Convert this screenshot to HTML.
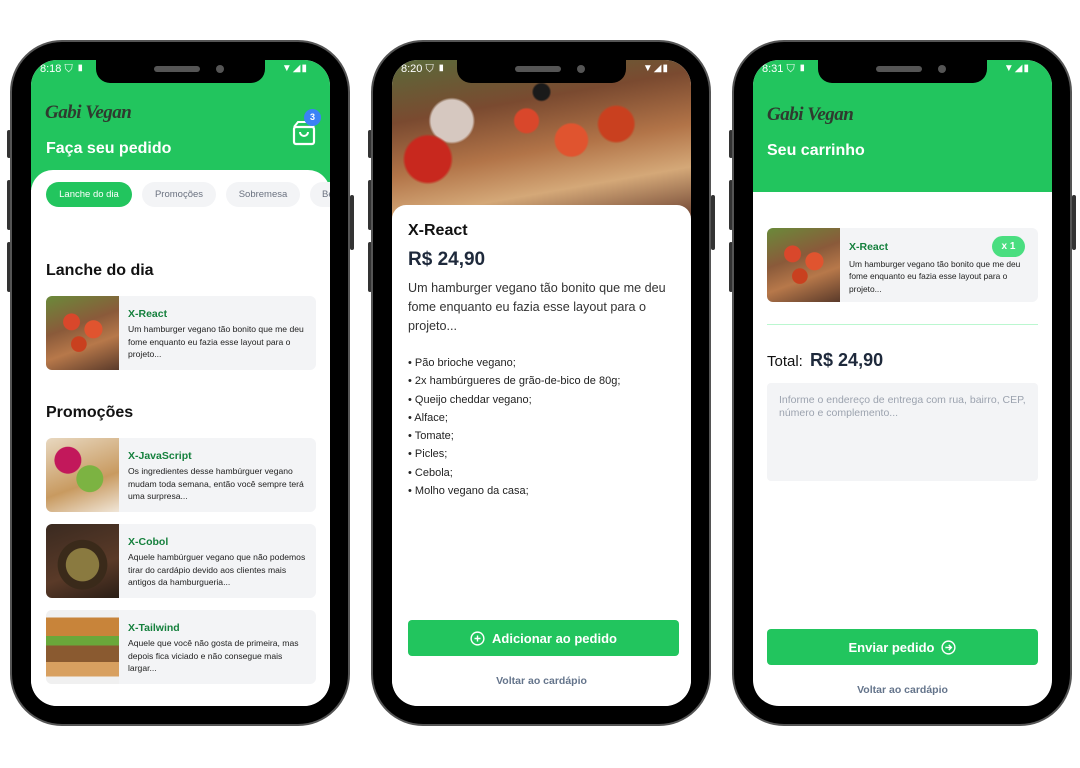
<!DOCTYPE html>
<html><head><meta charset="utf-8"><style>
*{margin:0;padding:0;box-sizing:border-box}
body{width:1080px;height:768px;background:#fff;position:relative;overflow:hidden;font-family:"Liberation Sans",sans-serif}
.ph{position:absolute;top:40px;width:340px;height:686px;border-radius:52px;background:#000;border:2px solid #555}
.btn-side{position:absolute;background:#333;width:4px;border-radius:2px}
.scr{position:absolute;left:19px;top:18px;width:299px;height:646px;border-radius:26px;background:#fff;overflow:hidden}
.notch{position:absolute;left:65px;top:0;width:169px;height:23px;background:#000;border-radius:0 0 14px 14px;z-index:5}
.notch .spk{position:absolute;left:58px;top:6px;width:46px;height:6px;background:#555;border-radius:3px}
.notch .cam{position:absolute;left:120px;top:5px;width:8px;height:8px;background:#555;border-radius:50%}
.a{position:absolute}
.st{position:absolute;top:3px;color:#fff;font-size:11px;z-index:6}
.sti{position:absolute;top:3px;right:22px;color:#fff;font-size:10px;z-index:6;letter-spacing:1px}
.g{background:#22c55e}
.logo{font-family:"Liberation Serif",serif;font-style:italic;font-size:19px;color:#2f3a2f;font-weight:bold;letter-spacing:-0.5px}
.h1{color:#fff;font-weight:bold;font-size:16px}
.h2{color:#111;font-weight:bold;font-size:16px}
.chip{position:absolute;top:122px;height:25px;border-radius:13px;background:#f3f4f6;color:#6b7280;font-size:9.5px;line-height:25px;text-align:center}
.card{position:absolute;left:15px;width:270px;height:74px;background:#f3f4f6;border-radius:6px;overflow:hidden}
.card .img{position:absolute;left:0;top:0;width:73px;height:74px}
.card .t{position:absolute;left:82px;top:12px;color:#15803d;font-weight:bold;font-size:10.5px}
.card .d{position:absolute;left:82px;top:27px;width:180px;color:#222;font-size:8.6px;line-height:12.5px}
.bru{background:radial-gradient(circle at 35% 35%,#d9472b 0 12%,transparent 13%),radial-gradient(circle at 65% 45%,#e0542f 0 14%,transparent 15%),radial-gradient(circle at 45% 65%,#c9401f 0 12%,transparent 13%),linear-gradient(160deg,#6a8a3a 0,#8a5a3a 40%,#b7784a 65%,#5a3a2a 100%)}
.gbtn{position:absolute;height:36px;border-radius:4px;background:#22c55e;color:#fff;font-weight:bold;font-size:13px;display:flex;align-items:center;justify-content:center;gap:7px}
.volt{position:absolute;left:0;width:299px;text-align:center;color:#64748b;font-size:10.5px;font-weight:bold}
</style></head><body>

<!-- Phone 1 -->
<div class="btn-side" style="left:7px;top:130px;height:28px"></div>
<div class="btn-side" style="left:7px;top:180px;height:50px"></div>
<div class="btn-side" style="left:7px;top:242px;height:50px"></div>
<div class="btn-side" style="left:350px;top:195px;height:55px"></div>
<div class="ph" style="left:10px">
 <div class="scr">
  <div class="notch"><div class="spk"></div><div class="cam"></div></div>
  <div class="st" style="left:9px">8:18 ⛉ ▮</div><div class="sti">▼◢▮</div>
  <div class="a g" style="left:0;top:0;width:299px;height:130px"></div>
  <div class="a logo" style="left:14px;top:42px">Gabi Vegan</div>
  <div class="a h1" style="left:15px;top:80px">Faça seu pedido</div>
  <svg class="a" style="left:261px;top:60px" width="24" height="26" viewBox="0 0 24 26"><rect x="2" y="7" width="20" height="17" rx="2" fill="none" stroke="#fff" stroke-width="2.2"/><path d="M2 7 L6 2 H18 L22 7" fill="none" stroke="#fff" stroke-width="2"/><path d="M8 12 a4 4 0 0 0 8 0" fill="none" stroke="#fff" stroke-width="2"/></svg>
  <div class="a" style="left:273px;top:49px;width:17px;height:17px;border-radius:50%;background:#3b82f6;color:#fff;font-size:9px;text-align:center;line-height:17px;font-weight:bold">3</div>
  <div class="a" style="left:0;top:110px;width:299px;height:540px;background:#fff;border-radius:22px 22px 0 0"></div>
  <div class="chip" style="left:15px;width:86px;background:#22c55e;color:#fff">Lanche do dia</div>
  <div class="chip" style="left:111px;width:74px">Promoções</div>
  <div class="chip" style="left:195px;width:74px">Sobremesa</div>
  <div class="chip" style="left:279px;width:40px;text-align:left;padding-left:12px">Bebidas</div>
  <div class="a h2" style="left:15px;top:202px">Lanche do dia</div>
  <div class="card" style="top:236px"><div class="img bru"></div><div class="t">X-React</div><div class="d">Um hamburger vegano tão bonito que me deu fome enquanto eu fazia esse layout para o projeto...</div></div>
  <div class="a h2" style="left:15px;top:344px">Promoções</div>
  <div class="card" style="top:378px"><div class="img" style="background:radial-gradient(circle at 30% 30%,#c2185b 0 18%,transparent 19%),radial-gradient(circle at 60% 55%,#7cb342 0 22%,transparent 23%),linear-gradient(160deg,#e8d8c0,#c89a60 60%,#f0e6d8)"></div><div class="t">X-JavaScript</div><div class="d">Os ingredientes desse hambúrguer vegano mudam toda semana, então você sempre terá uma surpresa...</div></div>
  <div class="card" style="top:464px"><div class="img" style="background:radial-gradient(circle at 50% 55%,#8a7a40 0 30%,#3a2a1a 31% 45%,transparent 46%),linear-gradient(160deg,#3a2a20,#5a3a28 60%,#2a1e16)"></div><div class="t">X-Cobol</div><div class="d">Aquele hambúrguer vegano que não podemos tirar do cardápio devido aos clientes mais antigos da hamburgueria...</div></div>
  <div class="card" style="top:550px"><div class="img" style="background:linear-gradient(180deg,#f0f0f0 0 10%,#c8843a 10% 35%,#6aa83a 35% 48%,#8a5a30 48% 70%,#d8a060 70% 90%,#f0f0f0 90%)"></div><div class="t">X-Tailwind</div><div class="d">Aquele que você não gosta de primeira, mas depois fica viciado e não consegue mais largar...</div></div>
 </div>
</div>

<!-- Phone 2 -->
<div class="btn-side" style="left:368px;top:130px;height:28px"></div>
<div class="btn-side" style="left:368px;top:180px;height:50px"></div>
<div class="btn-side" style="left:368px;top:242px;height:50px"></div>
<div class="btn-side" style="left:711px;top:195px;height:55px"></div>
<div class="ph" style="left:371px">
 <div class="scr">
  <div class="notch"><div class="spk"></div><div class="cam"></div></div>
  <div class="st" style="left:9px">8:20 ⛉ ▮</div><div class="sti">▼◢▮</div>
  <div class="a" style="left:0;top:0;width:299px;height:160px;background:radial-gradient(circle at 12% 62%,#c8281e 0 8%,transparent 9%),radial-gradient(circle at 20% 38%,#d6c8c0 0 8%,transparent 9%),radial-gradient(circle at 45% 38%,#d9472b 0 6%,transparent 7%),radial-gradient(circle at 60% 50%,#e0542f 0 8%,transparent 9%),radial-gradient(circle at 75% 40%,#c9401f 0 7%,transparent 8%),radial-gradient(circle at 50% 20%,#1a1a1a 0 4%,transparent 5%),linear-gradient(170deg,#5a6a3a 0,#7a4a30 30%,#b27448 55%,#d4a878 75%,#6a4030 100%)"></div>
  <div class="a" style="left:0;top:145px;width:299px;height:505px;background:#fff;border-radius:14px 14px 0 0"></div>
  <div class="a" style="left:16px;top:162px;font-size:16px;font-weight:bold;color:#111">X-React</div>
  <div class="a" style="left:16px;top:189px;font-size:19px;font-weight:bold;color:#1e293b">R$ 24,90</div>
  <div class="a" style="left:16px;top:219px;width:275px;font-size:12.6px;line-height:19px;color:#333">Um hamburger vegano tão bonito que me deu fome enquanto eu fazia esse layout para o projeto...</div>
  <div class="a" style="left:16px;top:294px;font-size:11px;line-height:18.3px;color:#222">• Pão brioche vegano;<br>• 2x hambúrgueres de grão-de-bico de 80g;<br>• Queijo cheddar vegano;<br>• Alface;<br>• Tomate;<br>• Picles;<br>• Cebola;<br>• Molho vegano da casa;</div>
  <div class="gbtn" style="left:16px;top:560px;width:271px"><svg width="15" height="15" viewBox="0 0 16 16"><circle cx="8" cy="8" r="6.8" fill="none" stroke="#fff" stroke-width="1.5"/><path d="M8 4.8V11.2M4.8 8H11.2" stroke="#fff" stroke-width="1.5"/></svg>Adicionar ao pedido</div>
  <div class="volt" style="top:615px">Voltar ao cardápio</div>
 </div>
</div>

<!-- Phone 3 -->
<div class="btn-side" style="left:729px;top:130px;height:28px"></div>
<div class="btn-side" style="left:729px;top:180px;height:50px"></div>
<div class="btn-side" style="left:729px;top:242px;height:50px"></div>
<div class="btn-side" style="left:1072px;top:195px;height:55px"></div>
<div class="ph" style="left:732px">
 <div class="scr">
  <div class="notch"><div class="spk"></div><div class="cam"></div></div>
  <div class="st" style="left:9px">8:31 ⛉ ▮</div><div class="sti">▼◢▮</div>
  <div class="a g" style="left:0;top:0;width:299px;height:132px"></div>
  <div class="a logo" style="left:14px;top:44px">Gabi Vegan</div>
  <div class="a h1" style="left:14px;top:82px">Seu carrinho</div>
  <div class="card" style="top:168px;left:14px;width:271px"><div class="img bru"></div><div class="t" style="top:13px">X-React</div><div class="d" style="top:30px;font-size:8.4px;line-height:12.3px">Um hamburger vegano tão bonito que me deu fome enquanto eu fazia esse layout para o projeto...</div>
   <div class="a" style="left:225px;top:8px;width:33px;height:21px;border-radius:11px;background:#4ade80;color:#fff;font-size:10px;font-weight:bold;text-align:center;line-height:21px">x 1</div></div>
  <div class="a" style="left:14px;top:264px;width:271px;height:1px;background:#bbf7d0"></div>
  <div class="a" style="left:14px;top:290px;font-size:15px;color:#111">Total: <b style="font-size:18px;color:#1e293b;margin-left:3px">R$ 24,90</b></div>
  <div class="a" style="left:14px;top:323px;width:271px;height:98px;background:#f3f4f6;border-radius:4px;padding:11px 12px;font-size:10.5px;line-height:13px;color:#9ca3af">Informe o endereço de entrega com rua, bairro, CEP, número e complemento...</div>
  <div class="gbtn" style="left:14px;top:569px;width:271px">Enviar pedido<svg width="15" height="15" viewBox="0 0 16 16"><circle cx="8" cy="8" r="6.8" fill="none" stroke="#fff" stroke-width="1.5"/><path d="M4.6 8H11M8.3 5.2L11.1 8L8.3 10.8" fill="none" stroke="#fff" stroke-width="1.5"/></svg></div>
  <div class="volt" style="top:624px">Voltar ao cardápio</div>
 </div>
</div>
</body></html>
